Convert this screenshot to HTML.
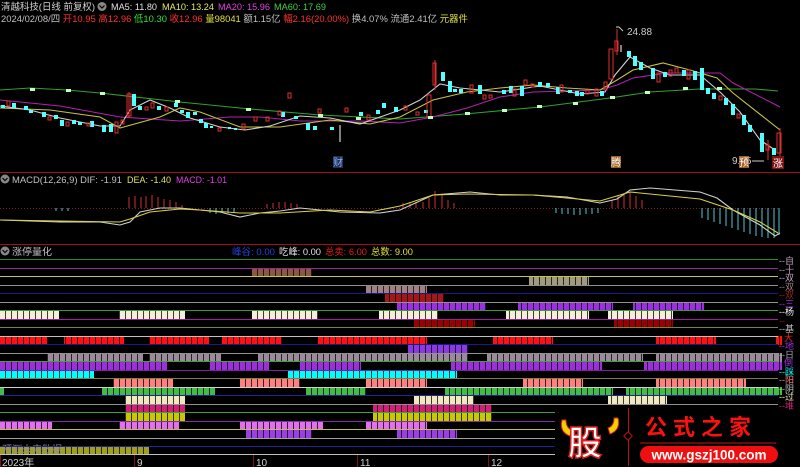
<!DOCTYPE html>
<html><head><meta charset="utf-8"><style>
html,body{margin:0;padding:0;background:#000;width:800px;height:467px;overflow:hidden}
svg{display:block}
text{font-family:"Liberation Sans","Noto Sans CJK SC",sans-serif}
</style></head><body>
<svg width="800" height="467" viewBox="0 0 800 467" xmlns="http://www.w3.org/2000/svg">
<defs>
<pattern id="st" width="6" height="10" patternUnits="userSpaceOnUse"><rect x="5" y="0" width="1" height="10" fill="#000" opacity="0.75"/></pattern>
</defs>
<rect width="800" height="467" fill="#000"/>
<!-- header -->
<g font-size="9.5">
<text x="1" y="10" fill="#d0d0d0" textLength="94" lengthAdjust="spacingAndGlyphs">清越科技(日线 前复权)</text>
<circle cx="102" cy="6.5" r="4.5" fill="#888"/><path d="M99.5 5.5l2.5 2.5 2.5-2.5" stroke="#000" stroke-width="1.2" fill="none"/>
<text x="111" y="10" fill="#e0e0e0" textLength="46" lengthAdjust="spacingAndGlyphs">MA5: 11.80</text>
<text x="162" y="10" fill="#e8e860" textLength="52" lengthAdjust="spacingAndGlyphs">MA10: 13.24</text>
<text x="218" y="10" fill="#e040e0" textLength="52" lengthAdjust="spacingAndGlyphs">MA20: 15.96</text>
<text x="274" y="10" fill="#40d040" textLength="52" lengthAdjust="spacingAndGlyphs">MA60: 17.69</text>
<text x="1" y="22" fill="#c0c0c0" textLength="467" lengthAdjust="spacingAndGlyphs">2024/02/08/四 <tspan fill="#ff3030">开10.95 高12.96 </tspan><tspan fill="#30e030">低10.30 </tspan><tspan fill="#ff3030">收12.96 </tspan><tspan fill="#e0e040">量98041 </tspan><tspan fill="#c0c0c0">额1.15亿 </tspan><tspan fill="#ff3030">幅2.16(20.00%) </tspan><tspan fill="#c0c0c0">换4.07% 流通2.41亿 </tspan><tspan fill="#e0e040">元器件</tspan></text>
</g>
<!-- MA lines -->
<g fill="none" stroke-width="1.1">
<polyline stroke="#30a030" points="0,90 30,88 67,90 100,93 180,102 250,109 320,115 400,119 465,114 540,107 610,98 650,92 700,89 755,89 778,91"/>
<polyline stroke="#b020b0" points="0,100 60,106 120,117 180,121 230,117 260,117 300,121 360,121 400,123 433,117 467,108 500,97 533,92 600,90 617,85 633,78 667,73 720,73 733,83 780,107"/>
<polyline stroke="#c8c040" points="0,108 50,110 100,117 120,128 160,117 180,108 200,112 240,127 280,127 330,120 370,124 400,117 433,100 467,92 500,88 533,85 567,88 600,90 617,80 633,70 663,63 690,70 717,78 733,93 780,130"/>
<polyline stroke="#d0d0d0" points="0,106 30,110 60,118 100,126 120,126 130,110 150,100 170,108 190,118 220,127 245,130 270,126 300,116 330,118 360,124 400,110 420,100 440,84 460,88 500,92 540,86 580,94 605,92 615,75 630,57 650,68 670,75 700,75 720,92 740,112 760,140 775,150"/>
</g>
<!-- candles -->
<g fill="#54ffff">
<rect x="1" y="105" width="4" height="3"/><rect x="12" y="103" width="4" height="5"/><rect x="24" y="106" width="4" height="4"/><rect x="29" y="110" width="4" height="3"/><rect x="42" y="112" width="4" height="5"/><rect x="54" y="115" width="4" height="4"/><rect x="60" y="120" width="4" height="6"/><rect x="72" y="120" width="4" height="4"/><rect x="78" y="122" width="4" height="3"/><rect x="90" y="121" width="4" height="6"/><rect x="102" y="125" width="4" height="7"/><rect x="109" y="124" width="4" height="8"/><rect x="132" y="94" width="4" height="12"/><rect x="138" y="106" width="4" height="4"/><rect x="157" y="106" width="4" height="4"/><rect x="174" y="103" width="4" height="4"/><rect x="180" y="110" width="4" height="3"/><rect x="186" y="112" width="4" height="6"/><rect x="193" y="112" width="4" height="3"/><rect x="199" y="119" width="4" height="4"/><rect x="204" y="123" width="4" height="5"/><rect x="210" y="126" width="3" height="2"/><rect x="228" y="127" width="3" height="2"/><rect x="234" y="128" width="3" height="2"/><rect x="281" y="112" width="4" height="5"/><rect x="294" y="116" width="4" height="3"/><rect x="306" y="123" width="4" height="7"/><rect x="313" y="126" width="4" height="4"/><rect x="330" y="127" width="4" height="3"/><rect x="359" y="112" width="4" height="4"/><rect x="376" y="110" width="4" height="4"/><rect x="382" y="103" width="4" height="5"/><rect x="394" y="107" width="4" height="5"/><rect x="424" y="110" width="4" height="3"/><rect x="441" y="72" width="4" height="9"/><rect x="448" y="81" width="4" height="11"/><rect x="453" y="89" width="4" height="3"/><rect x="459" y="89" width="4" height="4"/><rect x="478" y="85" width="4" height="9"/><rect x="502" y="90" width="4" height="4"/><rect x="509" y="86" width="4" height="7"/><rect x="520" y="86" width="4" height="10"/><rect x="538" y="82" width="4" height="5"/><rect x="546" y="83" width="4" height="4"/><rect x="556" y="87" width="4" height="7"/><rect x="568" y="90" width="4" height="3"/><rect x="575" y="91" width="4" height="5"/><rect x="580" y="92" width="4" height="4"/><rect x="600" y="91" width="4" height="5"/><rect x="627" y="51" width="4" height="6"/><rect x="633" y="56" width="4" height="10"/><rect x="639" y="62" width="4" height="8"/><rect x="651" y="68" width="4" height="11"/><rect x="663" y="72" width="4" height="5"/><rect x="682" y="70" width="4" height="6"/><rect x="693" y="71" width="4" height="9"/><rect x="700" y="68" width="4" height="22"/><rect x="706" y="88" width="4" height="6"/><rect x="712" y="93" width="4" height="6"/><rect x="724" y="98" width="4" height="7"/><rect x="731" y="104" width="4" height="11"/><rect x="742" y="115" width="4" height="10"/><rect x="748" y="125" width="4" height="7"/><rect x="760" y="133" width="4" height="19"/><rect x="772" y="148" width="4" height="7"/>
</g>
<g fill="none" stroke="#e03030" stroke-width="1">
<rect x="7" y="101" width="3" height="5"/><rect x="48" y="117" width="3" height="3"/><rect x="66" y="122" width="3" height="4"/><rect x="87" y="123" width="3" height="3"/><rect x="115" y="122" width="3" height="11"/><rect x="121" y="120" width="3" height="4"/><rect x="127" y="94" width="4" height="22"/><rect x="145" y="107" width="3" height="3"/><rect x="151" y="103" width="3" height="5"/><rect x="165" y="107" width="3" height="4"/><rect x="218" y="128" width="3" height="3"/><rect x="242" y="124" width="3" height="5"/><rect x="254" y="117" width="3" height="4"/><rect x="266" y="117" width="3" height="4"/><rect x="278" y="111" width="3" height="4"/><rect x="288" y="93" width="3" height="5"/><rect x="318" y="109" width="3" height="4"/><rect x="345" y="108" width="3" height="4"/><rect x="367" y="115" width="3" height="5"/><rect x="404" y="106" width="3" height="4"/><rect x="416" y="112" width="3" height="3"/><rect x="427" y="95" width="4" height="22"/><rect x="433" y="63" width="3" height="22"/><rect x="470" y="85" width="3" height="8"/><rect x="483" y="95" width="3" height="4"/><rect x="489" y="95" width="3" height="3"/><rect x="513" y="89" width="3" height="7"/><rect x="524" y="80" width="3" height="5"/><rect x="531" y="84" width="3" height="3"/><rect x="560" y="85" width="3" height="7"/><rect x="586" y="90" width="3" height="4"/><rect x="595" y="89" width="3" height="7"/><rect x="604" y="82" width="3" height="8"/><rect x="609" y="49" width="4" height="30"/><rect x="615" y="41" width="3" height="10"/><rect x="657" y="73" width="3" height="9"/><rect x="669" y="70" width="3" height="6"/><rect x="675" y="68" width="3" height="5"/><rect x="687" y="70" width="3" height="9"/><rect x="719" y="96" width="3" height="4"/><rect x="737" y="114" width="3" height="4"/><rect x="766" y="145" width="3" height="5"/><rect x="777" y="133" width="4" height="20"/>
</g>
<g stroke="#e03030"><line x1="129" y1="92" x2="129" y2="118"/><line x1="617" y1="29" x2="617" y2="55"/><line x1="768" y1="140" x2="768" y2="160"/><line x1="780" y1="128" x2="780" y2="157"/><line x1="435" y1="60" x2="435" y2="90"/></g>
<line x1="340" y1="125" x2="340" y2="142" stroke="#fff"/>
<line x1="621" y1="45" x2="621" y2="52" stroke="#fff"/>
<g fill="#c0ffc0"><rect x="30" y="88" width="5" height="3"/><rect x="66" y="89" width="5" height="3"/><rect x="100" y="92" width="5" height="3"/><rect x="175" y="100" width="5" height="3"/><rect x="246" y="108" width="5" height="3"/><rect x="318" y="114" width="5" height="3"/><rect x="356" y="117" width="5" height="3"/><rect x="428" y="116" width="5" height="3"/><rect x="465" y="112" width="5" height="3"/><rect x="502" y="109" width="5" height="3"/><rect x="537" y="105" width="5" height="3"/><rect x="573" y="102" width="5" height="3"/><rect x="610" y="96" width="5" height="3"/><rect x="645" y="91" width="5" height="3"/><rect x="683" y="87" width="5" height="3"/><rect x="717" y="87" width="5" height="3"/></g>
<path d="M616 27h3l4 4" stroke="#ccc" fill="none"/><text x="627" y="35" fill="#ccc" font-size="10">24.88</text>
<text x="732" y="164" fill="#ccc" font-size="10">9.05</text><path d="M752 161h12" stroke="#ccc"/>
<rect x="333" y="156" width="10" height="12" fill="#203050"/><text x="333" y="166" fill="#8ab0ff" font-size="10">财</text>
<rect x="611" y="156" width="10" height="12" fill="#a06020"/><text x="611" y="166" fill="#fff" font-size="10">腾</text>
<rect x="739" y="156" width="10" height="12" fill="#a06020"/><text x="739" y="166" fill="#fff" font-size="10">预</text>
<rect x="772" y="156" width="12" height="13" fill="#801010"/><text x="773" y="167" fill="#fff" font-size="10">涨</text>
<!-- separators -->
<line x1="0" y1="172.5" x2="800" y2="172.5" stroke="#a01010"/>
<line x1="0" y1="244.5" x2="800" y2="244.5" stroke="#a01010"/>
<!-- MACD -->
<g font-size="9.5">
<circle cx="5" cy="179" r="4.5" fill="#888"/><path d="M2.5 178l2.5 2.5 2.5-2.5" stroke="#000" stroke-width="1.2" fill="none"/>
<text x="12" y="183" fill="#c0c0c0" textLength="110" lengthAdjust="spacingAndGlyphs">MACD(12,26,9) DIF: -1.91</text>
<text x="127" y="183" fill="#e0e060" textLength="44" lengthAdjust="spacingAndGlyphs">DEA: -1.40</text>
<text x="176" y="183" fill="#e040e0" textLength="51" lengthAdjust="spacingAndGlyphs">MACD: -1.01</text>
</g>
<line x1="0" y1="208.5" x2="780" y2="208.5" stroke="#802020" stroke-dasharray="1 2"/>
<g stroke="#d03030"><line x1="129" y1="208" x2="129" y2="197"/><line x1="135" y1="208" x2="135" y2="196"/><line x1="141" y1="208" x2="141" y2="197"/><line x1="146" y1="208" x2="146" y2="196"/><line x1="152" y1="208" x2="152" y2="195"/><line x1="158" y1="208" x2="158" y2="197"/><line x1="164" y1="208" x2="164" y2="199"/><line x1="170" y1="208" x2="170" y2="200"/><line x1="176" y1="208" x2="176" y2="202"/><line x1="182" y1="208" x2="182" y2="205"/><line x1="267" y1="208" x2="267" y2="204"/><line x1="273" y1="208" x2="273" y2="203"/><line x1="279" y1="208" x2="279" y2="202"/><line x1="285" y1="208" x2="285" y2="202"/><line x1="291" y1="208" x2="291" y2="203"/><line x1="297" y1="208" x2="297" y2="204"/><line x1="403" y1="208" x2="403" y2="203"/><line x1="410" y1="208" x2="410" y2="202"/><line x1="416" y1="208" x2="416" y2="202"/><line x1="423" y1="208" x2="423" y2="202"/><line x1="429" y1="208" x2="429" y2="198"/><line x1="435" y1="208" x2="435" y2="191"/><line x1="442" y1="208" x2="442" y2="195"/><line x1="448" y1="208" x2="448" y2="200"/><line x1="454" y1="208" x2="454" y2="203"/><line x1="612" y1="208" x2="612" y2="200"/><line x1="618" y1="208" x2="618" y2="195"/><line x1="624" y1="208" x2="624" y2="193"/><line x1="630" y1="208" x2="630" y2="192"/><line x1="636" y1="208" x2="636" y2="196"/><line x1="642" y1="208" x2="642" y2="200"/></g>
<g stroke="#50c8d0"><line x1="56" y1="208" x2="56" y2="211"/><line x1="62" y1="208" x2="62" y2="211"/><line x1="68" y1="208" x2="68" y2="211"/><line x1="210" y1="208" x2="210" y2="213"/><line x1="216" y1="208" x2="216" y2="214"/><line x1="222" y1="208" x2="222" y2="213"/><line x1="228" y1="208" x2="228" y2="213"/><line x1="234" y1="208" x2="234" y2="212"/><line x1="556" y1="208" x2="556" y2="213"/><line x1="562" y1="208" x2="562" y2="214"/><line x1="568" y1="208" x2="568" y2="214"/><line x1="574" y1="208" x2="574" y2="215"/><line x1="580" y1="208" x2="580" y2="215"/><line x1="586" y1="208" x2="586" y2="214"/><line x1="592" y1="208" x2="592" y2="214"/><line x1="598" y1="208" x2="598" y2="213"/><line x1="702" y1="208" x2="702" y2="218"/><line x1="708" y1="208" x2="708" y2="220"/><line x1="714" y1="208" x2="714" y2="222"/><line x1="720" y1="208" x2="720" y2="224"/><line x1="726" y1="208" x2="726" y2="226"/><line x1="732" y1="208" x2="732" y2="228"/><line x1="738" y1="208" x2="738" y2="230"/><line x1="744" y1="208" x2="744" y2="232"/><line x1="750" y1="208" x2="750" y2="234"/><line x1="756" y1="208" x2="756" y2="236"/><line x1="762" y1="208" x2="762" y2="237"/><line x1="768" y1="208" x2="768" y2="238"/><line x1="774" y1="208" x2="774" y2="238"/><line x1="779" y1="208" x2="779" y2="235"/></g>
<g fill="none" stroke-width="1.1">
<polyline stroke="#d0d0d0" points="0,220 60,222 100,222 120,225 130,222 140,212 160,208 180,208 200,210 220,212 240,217 260,213 280,211 300,208 340,212 380,213 400,210 433,195 470,192 500,195 533,195 567,197 600,203 617,199 630,190 650,188 700,192 717,198 733,210 760,225 775,236 780,233"/>
<polyline stroke="#d8d040" points="0,220 60,221 120,222 130,219 150,212 180,209 200,210 240,213 280,213 330,210 370,212 400,206 433,195 467,194 533,195 600,201 630,192 660,195 700,199 733,210 760,222 778,233"/>
</g>
<!-- lower panel header -->
<g font-size="9.5">
<circle cx="5" cy="251" r="4.5" fill="#888"/><path d="M2.5 250l2.5 2.5 2.5-2.5" stroke="#000" stroke-width="1.2" fill="none"/>
<text x="12" y="255" fill="#c0c0c0" textLength="40" lengthAdjust="spacingAndGlyphs">涨停量化</text>
<text x="232" y="255" fill="#2040e0" textLength="43" lengthAdjust="spacingAndGlyphs">峰谷: 0.00</text>
<text x="279" y="255" fill="#e0e0e0" textLength="42" lengthAdjust="spacingAndGlyphs">吃峰: 0.00</text>
<text x="325" y="255" fill="#e02020" textLength="42" lengthAdjust="spacingAndGlyphs">总卖: 6.00</text>
<text x="371" y="255" fill="#e0e040" textLength="42" lengthAdjust="spacingAndGlyphs">总数: 9.00</text>
</g>
<!-- bars -->
<g>
<g fill="#8a5a40"><rect x="252" y="269" width="60" height="8"/></g>
<g fill="#a09a80"><rect x="529" y="277" width="60" height="8"/></g>
<g fill="#a08080"><rect x="366" y="285" width="61" height="9"/></g>
<g fill="#a01818"><rect x="385" y="294" width="59" height="9"/></g>
<g fill="#9b30e0"><rect x="397" y="302" width="89" height="9"/><rect x="518" y="302" width="95" height="9"/><rect x="633" y="302" width="71" height="9"/></g>
<g fill="#f5eed8"><rect x="0" y="311" width="59" height="9"/><rect x="119" y="311" width="66" height="9"/><rect x="252" y="311" width="66" height="9"/><rect x="379" y="311" width="59" height="9"/><rect x="506" y="311" width="83" height="9"/><rect x="608" y="311" width="65" height="9"/></g>
<g fill="#900"><rect x="414" y="320" width="61" height="8"/><rect x="614" y="320" width="59" height="8"/></g>
<g fill="#ff1010"><rect x="0" y="336" width="47" height="9"/><rect x="64" y="336" width="60" height="9"/><rect x="149" y="336" width="60" height="9"/><rect x="222" y="336" width="60" height="9"/><rect x="318" y="336" width="109" height="9"/><rect x="493" y="336" width="60" height="9"/><rect x="656" y="336" width="60" height="9"/><rect x="776" y="336" width="6" height="9"/></g>
<g fill="#8a3ae0"><rect x="408" y="345" width="60" height="8"/></g>
<g fill="#9a8a9a"><rect x="47" y="353" width="96" height="9"/><rect x="149" y="353" width="72" height="9"/><rect x="258" y="353" width="210" height="9"/><rect x="487" y="353" width="156" height="9"/><rect x="656" y="353" width="126" height="9"/></g>
<g fill="#9b30d8"><rect x="0" y="362" width="167" height="8"/><rect x="210" y="362" width="59" height="8"/><rect x="300" y="362" width="61" height="8"/><rect x="451" y="362" width="151" height="8"/><rect x="644" y="362" width="138" height="8"/></g>
<g fill="#00ffff"><rect x="0" y="370" width="94" height="8"/><rect x="288" y="370" width="169" height="8"/></g>
<g fill="#ff8080"><rect x="113" y="378" width="60" height="9"/><rect x="240" y="378" width="60" height="9"/><rect x="366" y="378" width="61" height="9"/><rect x="523" y="378" width="60" height="9"/><rect x="656" y="378" width="90" height="9"/></g>
<g fill="#44bb44"><rect x="0" y="387" width="4" height="8"/><rect x="102" y="387" width="113" height="8"/><rect x="306" y="387" width="60" height="8"/><rect x="445" y="387" width="168" height="8"/><rect x="626" y="387" width="156" height="8"/></g>
<g fill="#f0e8c0"><rect x="125" y="395" width="60" height="9"/><rect x="414" y="395" width="60" height="9"/><rect x="608" y="395" width="59" height="9"/></g>
<g fill="#d0207a"><rect x="125" y="404" width="60" height="8"/><rect x="373" y="404" width="119" height="8"/></g>
<g fill="#c8c800"><rect x="125" y="412" width="60" height="9"/><rect x="373" y="412" width="119" height="9"/></g>
<g fill="#e070f0"><rect x="0" y="421" width="52" height="8"/><rect x="119" y="421" width="60" height="8"/><rect x="240" y="421" width="83" height="8"/><rect x="366" y="421" width="61" height="8"/></g>
<g fill="#9a40e0"><rect x="246" y="429" width="66" height="9"/><rect x="397" y="429" width="60" height="9"/></g>
<g fill="#a0a020"><rect x="0" y="446" width="149" height="9"/></g>
</g>
<rect x="0" y="262" width="782" height="193" fill="url(#st)"/>
<text x="2" y="453" fill="#909090" font-size="10">预测未来数据</text>
<!-- horizontal lines -->
<g stroke-width="1">
<line x1="0" x2="778" y1="259.5" y2="259.5" stroke="#2a8a2a"/>
<line x1="0" x2="778" y1="268.5" y2="268.5" stroke="#a020a0"/>
<line x1="0" x2="778" y1="276.5" y2="276.5" stroke="#c8c840"/>
<line x1="0" x2="778" y1="285.5" y2="285.5" stroke="#909090"/>
<line x1="0" x2="778" y1="293.5" y2="293.5" stroke="#1a1a90"/>
<line x1="0" x2="778" y1="302.5" y2="302.5" stroke="#909090"/>
<line x1="0" x2="778" y1="310.5" y2="310.5" stroke="#3a9a3a"/>
<line x1="0" x2="778" y1="319.5" y2="319.5" stroke="#a020a0"/>
<line x1="0" x2="778" y1="327.5" y2="327.5" stroke="#808040"/>
<line x1="0" x2="778" y1="336.5" y2="336.5" stroke="#c0c0c0"/>
<line x1="0" x2="778" y1="344.5" y2="344.5" stroke="#1a1a90"/>
<line x1="0" x2="778" y1="353.5" y2="353.5" stroke="#909090"/>
<line x1="0" x2="778" y1="361.5" y2="361.5" stroke="#40a040"/>
<line x1="0" x2="778" y1="370.5" y2="370.5" stroke="#8020a0"/>
<line x1="0" x2="778" y1="378.5" y2="378.5" stroke="#808040"/>
<line x1="0" x2="778" y1="387.5" y2="387.5" stroke="#d0d0d0"/>
<line x1="0" x2="778" y1="395.5" y2="395.5" stroke="#2020a0"/>
<line x1="0" x2="778" y1="404.5" y2="404.5" stroke="#909090"/>
<line x1="0" x2="778" y1="412.5" y2="412.5" stroke="#40a040"/>
<line x1="0" x2="778" y1="421.5" y2="421.5" stroke="#8030a0"/>
<line x1="0" x2="778" y1="429.5" y2="429.5" stroke="#c0c040"/>
<line x1="0" x2="778" y1="438.5" y2="438.5" stroke="#a0a0a0"/>
<line x1="0" x2="778" y1="446.5" y2="446.5" stroke="#2020a0"/>
<line x1="0" x2="778" y1="454.5" y2="454.5" stroke="#c0c0c0"/>
</g>
<!-- right labels -->
<g font-size="9">
<text x="779" y="264" fill="#c0a0c0">--自</text><text x="779" y="273" fill="#c0a0c0">--十</text><text x="779" y="281" fill="#c0a0c0">--双</text><text x="779" y="290" fill="#a08080">--双</text><text x="779" y="298" fill="#a02020">--双</text><text x="779" y="307" fill="#9b30e0">--三</text><text x="779" y="315" fill="#f0f0f0">--杨</text><text x="779" y="324" fill="#a01010">--</text><text x="779" y="332" fill="#c0c0c0">--基</text><text x="784" y="341" fill="#ff2020">大</text><text x="779" y="349" fill="#9b30e0">--地</text><text x="779" y="358" fill="#b0a0b0">--日</text><text x="784" y="366" fill="#9b30d8">倒</text><text x="779" y="375" fill="#00ffff">--踩</text><text x="779" y="383" fill="#ff8080">--阳</text><text x="779" y="392" fill="#c0c0c0">--阴</text><text x="779" y="400" fill="#f0e8c0">--过</text><text x="779" y="409" fill="#d0207a">--堆</text>
</g>
<!-- axis -->
<g stroke="#801010"><line x1="0.5" y1="455" x2="0.5" y2="467"/><line x1="134.5" y1="455" x2="134.5" y2="467"/><line x1="253.5" y1="455" x2="253.5" y2="467"/><line x1="357.5" y1="455" x2="357.5" y2="467"/><line x1="488.5" y1="455" x2="488.5" y2="467"/></g>
<g font-size="10" fill="#d0d0d0"><text x="2" y="466">2023年</text><text x="137" y="466">9</text><text x="256" y="466">10</text><text x="360" y="466">11</text><text x="491" y="466">12</text></g>
<!-- logo -->
<rect x="555" y="410" width="245" height="57" fill="#000"/>
<path d="M562 420 q-3 12 8 16 l2 -6 q-6 -2 -6 -10z" fill="#f0d000" stroke="#e02020"/>
<path d="M618 418 q3 12 -8 16 l-2 -6 q6 -2 6 -10z" fill="#f0d000" stroke="#e02020"/>
<text x="568" y="455" font-size="34" font-weight="bold" fill="#fff" stroke="#e02020" stroke-width="1.5" font-family="Noto Sans CJK SC,sans-serif">股</text>
<line x1="628.5" y1="408" x2="628.5" y2="466" stroke="#c01010"/>
<rect x="625" y="433" width="6" height="6" transform="rotate(45 628 436)" fill="#000" stroke="#c01010"/>
<text x="645" y="435" font-size="22" font-weight="bold" fill="#ff1010" letter-spacing="6" font-family="Noto Serif CJK SC,serif">公式之家</text>
<line x1="640" y1="443" x2="776" y2="443" stroke="#801010" stroke-width="1.5"/>
<rect x="640" y="446" width="138" height="17" rx="8.5" fill="#ee1010"/>
<text x="709" y="459.5" font-size="13.5" font-weight="bold" fill="#fff" text-anchor="middle">www.gszj100.com</text>
</svg>
</body></html>
